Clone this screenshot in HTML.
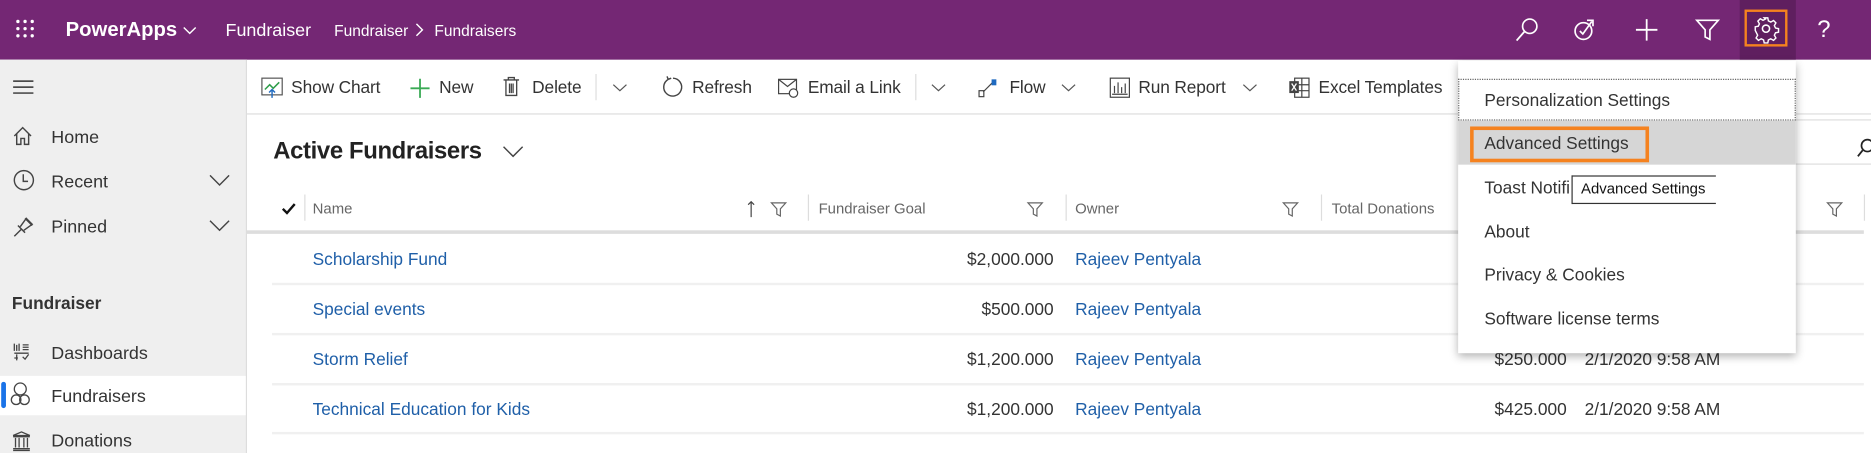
<!DOCTYPE html>
<html><head><meta charset="utf-8"><style>
html,body{margin:0;padding:0;width:1871px;height:453px;overflow:hidden;background:#fff}
#w{position:absolute;left:0;top:0;width:1568px;height:380px;transform:scale(1.19324);transform-origin:0 0;font-family:"Liberation Sans",sans-serif;color:#333}
.a{position:absolute;white-space:nowrap}
.top{position:absolute;left:0;top:0;width:1568px;height:50px;background:#742774}
.w{color:#fff;margin-top:1px}
.side{position:absolute;left:0;top:50px;width:206px;height:330px;background:#efefef;border-right:1px solid #ddd}
.nav{font-size:15px;color:#333;margin-top:2px}
.cmd{font-size:14.5px;color:#333;margin-top:2px;letter-spacing:-0.1px}
.hd{font-size:12.5px;color:#666;margin-top:2px}
.lnk{font-size:14.5px;color:#1f5fa8;margin-top:2px}
.num{font-size:14.5px;color:#333;margin-top:2px}
.row{position:absolute;left:228px;width:1334px;height:2px;background:#f0f0f0}
.vs{position:absolute;width:1px;height:22px;background:#ddd}
.mi{font-size:14.5px;color:#333;left:1244px;margin-top:2px}
svg{position:absolute;overflow:visible}
</style></head><body><div id="w">
<div class="top"></div>
<svg style="left:13px;top:16px" width="16" height="16"><g fill="#fff"><circle cx="2" cy="2" r="1.4"/><circle cx="8" cy="2" r="1.4"/><circle cx="14" cy="2" r="1.4"/><circle cx="2" cy="8" r="1.4"/><circle cx="8" cy="8" r="1.4"/><circle cx="14" cy="8" r="1.4"/><circle cx="2" cy="14" r="1.4"/><circle cx="8" cy="14" r="1.4"/><circle cx="14" cy="14" r="1.4"/></g></svg>
<div class="a w" style="left:55px;top:14px;font-size:17px;font-weight:bold">PowerApps</div>
<svg style="left:153px;top:22px" width="12" height="8"><path d="M1 1l5 5 5-5" stroke="#fff" fill="none" stroke-width="1.2"/></svg>
<div class="a w" style="left:189px;top:16px;font-size:15px">Fundraiser</div>
<div class="a w" style="left:280px;top:17px;font-size:13px">Fundraiser</div>
<svg style="left:348px;top:19px" width="8" height="12"><path d="M1 1l5 5-5 5" stroke="#fff" fill="none" stroke-width="1.2"/></svg>
<div class="a w" style="left:364px;top:17px;font-size:13px">Fundraisers</div>
<svg style="left:1270px;top:15px" width="20" height="20"><circle cx="12" cy="7" r="6" stroke="#fff" fill="none" stroke-width="1.4"/><path d="M8 11L1 19" stroke="#fff" stroke-width="1.5"/></svg>
<svg style="left:1318px;top:15px" width="20" height="20"><circle cx="9" cy="11" r="7" stroke="#fff" fill="none" stroke-width="1.4"/><path d="M6 11l2.5 2.5L16 3M12 2h5v5" stroke="#fff" fill="none" stroke-width="1.4"/></svg>
<svg style="left:1370px;top:15px" width="20" height="20"><path d="M10 1v18M1 10h18" stroke="#fff" stroke-width="1.5"/></svg>
<svg style="left:1421px;top:15px" width="20" height="20"><path d="M1 2h18l-7 8v8l-4-2v-6z" stroke="#fff" fill="none" stroke-width="1.4"/></svg>
<div class="a" style="left:1458px;top:0;width:47px;height:50px;background:#5f1f5f"></div>
<div class="a" style="left:1462px;top:8px;width:32px;height:27px;border:2.5px solid #f5821f"></div>
<svg style="left:1470px;top:14px" width="20" height="20"><circle cx="10" cy="10" r="3" stroke="#fff" fill="none" stroke-width="1.3"/><path d="M8.5 1h3l.5 2.5 2 1 2.3-1.3 2 2-1.3 2.3 1 2 2.5.5v3l-2.5.5-1 2 1.3 2.3-2 2-2.3-1.3-2 1-.5 2.5h-3l-.5-2.5-2-1-2.3 1.3-2-2 1.3-2.3-1-2L1 11.5v-3l2.5-.5 1-2-1.3-2.3 2-2 2.3 1.3 2-1z" stroke="#fff" fill="none" stroke-width="1.2"/></svg>
<div class="a w" style="left:1523px;top:13px;font-size:20px">?</div>
<div class="side"></div>
<svg style="left:11px;top:67px" width="17" height="12"><path d="M0 1h17M0 6h17M0 11h17" stroke="#333" stroke-width="1.2"/></svg>
<svg style="left:11px;top:106px" width="16" height="16"><path d="M1 8L8 1l7 7M3 6v9h3.5v-5h3v5H13V6" stroke="#444" fill="none" stroke-width="1.2"/></svg>
<div class="a nav" style="left:43px;top:105px">Home</div>
<svg style="left:11px;top:142px" width="18" height="18"><circle cx="9" cy="9" r="8" stroke="#444" fill="none" stroke-width="1.2"/><path d="M8.5 4v6h4" stroke="#444" fill="none" stroke-width="1.2"/></svg>
<div class="a nav" style="left:43px;top:142px">Recent</div>
<svg style="left:175px;top:146px" width="18" height="10"><path d="M1 1l8 8 8-8" stroke="#444" fill="none" stroke-width="1.2"/></svg>
<svg style="left:11px;top:181px" width="18" height="18"><path d="M1 17l6-6M4 8l6 6M6 9l5-7 5 5-7 5M10 2l6 6" stroke="#444" fill="none" stroke-width="1.2"/></svg>
<div class="a nav" style="left:43px;top:180px">Pinned</div>
<svg style="left:175px;top:184px" width="18" height="10"><path d="M1 1l8 8 8-8" stroke="#444" fill="none" stroke-width="1.2"/></svg>
<div class="a" style="left:10px;top:247px;font-size:14.5px;font-weight:bold;color:#333">Fundraiser</div>
<svg style="left:11px;top:287px" width="14" height="16"><path d="M1 1v6M3 2v5M5 1v6M8 2h5M8 4h5M8 6h5M1 9h12M3 10v5M1 13h3M8 12l2 2 3-4" stroke="#444" fill="none" stroke-width="1.1"/></svg>
<div class="a nav" style="left:43px;top:286px">Dashboards</div>
<div class="a" style="left:0;top:315px;width:206px;height:33px;background:#fff"></div>
<div class="a" style="left:1px;top:320px;width:4px;height:22px;background:#1a73e8;border-radius:2px"></div>
<svg style="left:9px;top:320px" width="16" height="22"><circle cx="8" cy="6" r="5" stroke="#444" fill="none" stroke-width="1.1"/><circle cx="4.5" cy="15" r="4" stroke="#444" fill="none" stroke-width="1.1"/><circle cx="11.5" cy="15" r="4" stroke="#444" fill="none" stroke-width="1.1"/></svg>
<div class="a nav" style="left:43px;top:322px">Fundraisers</div>
<svg style="left:10px;top:361px" width="16" height="17"><path d="M1 4L8 1l7 3zM1 5h14M3 6v8M6 6v8M10 6v8M13 6v8M1 15h14M1 16.5h14" stroke="#444" fill="none" stroke-width="1.1"/></svg>
<div class="a nav" style="left:43px;top:359px">Donations</div>
<div class="a" style="left:207px;top:95px;width:1361px;height:1px;background:#ddd"></div>
<svg style="left:219px;top:65px" width="18" height="17"><rect x="0.5" y="0.5" width="17" height="14" stroke="#555" fill="none"/><path d="M3 10l4-4 3 3 5-5" stroke="#2e9e4a" fill="none" stroke-width="1.3"/><path d="M9 17V10M6.5 12.5L9 10l2.5 2.5" stroke="#1f6ac0" fill="none" stroke-width="1.2"/></svg>
<div class="a cmd" style="left:244px;top:64px">Show Chart</div>
<svg style="left:344px;top:66px" width="16" height="16"><path d="M8 0v16M0 8h16" stroke="#3aaa55" stroke-width="1.5"/></svg>
<div class="a cmd" style="left:368px;top:64px">New</div>
<svg style="left:422px;top:64px" width="13" height="17"><path d="M0 3h13M4 3V1h5v2M2 3v13h9V3M5 6v8M6.5 6v8M8 6v8" stroke="#444" fill="none" stroke-width="1.1"/></svg>
<div class="a cmd" style="left:446px;top:64px">Delete</div>
<div class="vs" style="left:499px;top:62px"></div>
<svg style="left:513px;top:70px" width="13" height="7"><path d="M1 1l5.5 5 5.5-5" stroke="#555" fill="none"/></svg>
<svg style="left:554px;top:64px" width="18" height="18"><path d="M6 2.5A7.5 7.5 0 1 0 10 1.5M6 2.5l-1-2.5M6 2.5l2.5-1" stroke="#444" fill="none" stroke-width="1.2"/></svg>
<div class="a cmd" style="left:580px;top:64px">Refresh</div>
<svg style="left:652px;top:66px" width="18" height="17"><rect x="0.5" y="0.5" width="15" height="12" stroke="#444" fill="none"/><path d="M0.5 0.5l7.5 6 7.5-6" stroke="#444" fill="none"/><circle cx="13" cy="12" r="3.5" fill="#fff" stroke="#444"/></svg>
<div class="a cmd" style="left:677px;top:64px">Email a Link</div>
<div class="vs" style="left:767px;top:62px"></div>
<svg style="left:780px;top:70px" width="13" height="7"><path d="M1 1l5.5 5 5.5-5" stroke="#555" fill="none"/></svg>
<svg style="left:820px;top:66px" width="16" height="16"><rect x="0.5" y="10" width="4" height="5" stroke="#444" fill="none"/><path d="M4 11l8-8" stroke="#444"/><rect x="11" y="0.5" width="4" height="5" fill="#1f6ac0"/></svg>
<div class="a cmd" style="left:846px;top:64px">Flow</div>
<svg style="left:889px;top:70px" width="13" height="7"><path d="M1 1l5.5 5 5.5-5" stroke="#555" fill="none"/></svg>
<svg style="left:930px;top:65px" width="17" height="17"><rect x="0.5" y="0.5" width="16" height="16" stroke="#444" fill="none"/><path d="M4 13V7M7 13V4M10 13V8M13 13V5M2 14h13" stroke="#444"/></svg>
<div class="a cmd" style="left:954px;top:64px">Run Report</div>
<svg style="left:1041px;top:70px" width="13" height="7"><path d="M1 1l5.5 5 5.5-5" stroke="#555" fill="none"/></svg>
<svg style="left:1080px;top:65px" width="18" height="17"><rect x="5" y="0.5" width="12" height="16" stroke="#444" fill="none"/><path d="M5 6h12M5 11h12M11 0.5v16" stroke="#444"/><rect x="0.5" y="3" width="8" height="10" fill="#444"/><path d="M2.5 5l4 6M6.5 5l-4 6" stroke="#fff" stroke-width="1.1"/></svg>
<div class="a cmd" style="left:1105px;top:64px">Excel Templates</div>
<div class="a" style="left:229px;top:116px;font-size:20px;font-weight:bold;color:#222;letter-spacing:-0.3px">Active Fundraisers</div>
<svg style="left:421px;top:122px" width="18" height="10"><path d="M1 1l8 8 8-8" stroke="#444" fill="none" stroke-width="1.2"/></svg>
<div class="a" style="left:1505px;top:100px;width:63px;height:1px;background:#ddd"></div>
<div class="a" style="left:1505px;top:137px;width:63px;height:1px;background:#ddd"></div>
<svg style="left:1556px;top:116px" width="14" height="16"><circle cx="9" cy="6" r="5" stroke="#222" fill="none" stroke-width="1.4"/><path d="M5 10L1 15" stroke="#222" stroke-width="1.5"/></svg>
<svg style="left:236px;top:170px" width="12" height="10"><path d="M1 5l3.5 3.5L11 1" stroke="#111" fill="none" stroke-width="2"/></svg>
<div class="vs" style="left:255px;top:163px"></div>
<div class="a hd" style="left:262px;top:166px">Name</div>
<svg style="left:626px;top:168px" width="7" height="14"><path d="M3.5 14V1M1 3.5l2.5-2.5 2.5 2.5" stroke="#444" fill="none"/></svg>
<svg style="left:646px;top:169px" width="13" height="13"><path d="M0.5 1h12l-4.5 5v6l-3-1.5V6z" stroke="#666" fill="none"/></svg>
<div class="vs" style="left:677px;top:163px"></div>
<div class="a hd" style="left:686px;top:166px">Fundraiser Goal</div>
<svg style="left:861px;top:169px" width="13" height="13"><path d="M0.5 1h12l-4.5 5v6l-3-1.5V6z" stroke="#666" fill="none"/></svg>
<div class="vs" style="left:893px;top:163px"></div>
<div class="a hd" style="left:901px;top:166px">Owner</div>
<svg style="left:1075px;top:169px" width="13" height="13"><path d="M0.5 1h12l-4.5 5v6l-3-1.5V6z" stroke="#666" fill="none"/></svg>
<div class="vs" style="left:1107px;top:163px"></div>
<div class="a hd" style="left:1116px;top:166px">Total Donations</div>
<svg style="left:1531px;top:169px" width="13" height="13"><path d="M0.5 1h12l-4.5 5v6l-3-1.5V6z" stroke="#666" fill="none"/></svg>
<div class="vs" style="left:1562px;top:163px"></div>
<div class="a" style="left:207px;top:193px;width:1355px;height:3px;background:#ddd"></div>
<div class="a lnk" style="left:262px;top:208px">Scholarship Fund</div>
<div class="a num" style="left:783px;width:100px;text-align:right;top:208px">$2,000.000</div>
<div class="a lnk" style="left:901px;top:208px">Rajeev Pentyala</div>
<div class="row" style="top:237px"></div>
<div class="a lnk" style="left:262px;top:250px">Special events</div>
<div class="a num" style="left:783px;width:100px;text-align:right;top:250px">$500.000</div>
<div class="a lnk" style="left:901px;top:250px">Rajeev Pentyala</div>
<div class="row" style="top:279px"></div>
<div class="a lnk" style="left:262px;top:292px">Storm Relief</div>
<div class="a num" style="left:783px;width:100px;text-align:right;top:292px">$1,200.000</div>
<div class="a lnk" style="left:901px;top:292px">Rajeev Pentyala</div>
<div class="a num" style="left:1213px;width:100px;text-align:right;top:292px">$250.000</div>
<div class="a num" style="left:1328px;top:292px">2/1/2020 9:58 AM</div>
<div class="row" style="top:321px"></div>
<div class="a lnk" style="left:262px;top:334px">Technical Education for Kids</div>
<div class="a num" style="left:783px;width:100px;text-align:right;top:334px">$1,200.000</div>
<div class="a lnk" style="left:901px;top:334px">Rajeev Pentyala</div>
<div class="a num" style="left:1213px;width:100px;text-align:right;top:334px">$425.000</div>
<div class="a num" style="left:1328px;top:334px">2/1/2020 9:58 AM</div>
<div class="row" style="top:362px"></div>
<div class="a" style="left:1222px;top:51px;width:283px;height:245px;background:#fff;box-shadow:0 3px 7px rgba(0,0,0,0.3)"></div>
<div class="a" style="left:1222px;top:66px;width:281px;height:33px;border:1px dotted #666"></div>
<div class="a mi" style="top:75px">Personalization Settings</div>
<div class="a" style="left:1222px;top:101px;width:283px;height:37px;background:#d6d6d6"></div>
<div class="a" style="left:1232px;top:106px;width:144px;height:24px;border:3px solid #f5821f"></div>
<div class="a mi" style="top:111px">Advanced Settings</div>
<div class="a mi" style="top:148px">Toast Notifi</div>
<div class="a" style="left:1317px;top:147px;width:120px;height:22px;background:#fff;border:1px solid #333;border-right:none"></div>
<div class="a" style="left:1325px;top:151px;font-size:12.5px;color:#111">Advanced Settings</div>
<div class="a mi" style="top:185px">About</div>
<div class="a mi" style="top:221px">Privacy &amp; Cookies</div>
<div class="a mi" style="top:258px">Software license terms</div>
</div></body></html>
